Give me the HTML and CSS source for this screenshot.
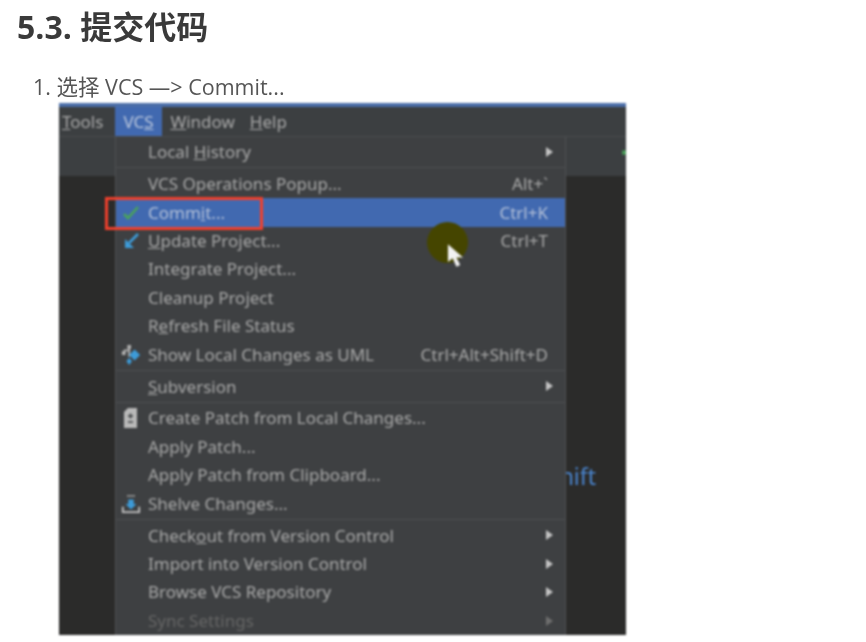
FILE: index.html
```html
<!DOCTYPE html>
<html lang="zh-CN">
<head>
  <meta charset="UTF-8" />
  <meta name="viewport" content="width=device-width, initial-scale=1.0" />
  <title>提交代码</title>
  <link rel="stylesheet" href="styles.css">
</head>
<body>
  <h2>5.3. 提交代码</h2>
  <p class="step">1. 选择 VCS —&gt; Commit...</p>

  <div class="shot">
    <div class="menubar">
      <span class="top"><u>T</u>ools</span>
      <span class="top active">VC<u>S</u></span>
      <span class="top"><u>W</u>indow</span>
      <span class="top"><u>H</u>elp</span>
    </div>
    <div class="toolbar"><i class="green-dot"></i></div>
    <div class="editor"></div>
    <span class="shift">Shift</span>

    <div class="menu">
      <div class="row"><span></span><span>Local <u>H</u>istory</span><span></span><i class="arrow"></i></div>
      <div class="sep"></div>
      <div class="row"><span></span><span>VCS Operations Popup...</span><span class="key">Alt+`</span></div>
      <div class="row current">
        <svg class="ico" viewBox="0 0 20 20"><path d="M3 11l4 4L17 4" fill="none" stroke="#4aa35a" stroke-width="2.6"/></svg>
        <span>Comm<u>i</u>t...</span><span class="key">Ctrl+K</span>
      </div>
      <div class="row">
        <svg class="ico" viewBox="0 0 20 20"><path d="M17 3L8 12" fill="none" stroke="#3d9bd8" stroke-width="2.6"/><path d="M4 8v9h9z" fill="#3d9bd8"/></svg>
        <span><u>U</u>pdate Project...</span><span class="key">Ctrl+T</span>
      </div>
      <div class="row"><span></span><span>Integrate Project...</span><span></span></div>
      <div class="row"><span></span><span>Cleanup Project</span><span></span></div>
      <div class="row"><span></span><span>R<u>e</u>fresh File Status</span><span></span></div>
      <div class="row">
        <svg class="ico" viewBox="0 0 22 22"><path d="M7 0h4v4H7zM1 7h4v4H1zM8 4h2v9H8zM3 7V5h6v2z" fill="#b4b4b4"/><path d="M15 5l6 6-6 6-6-6z" fill="#3d9bd8"/><path d="M9 14l3 4-3 4-3-4z" fill="#3d9bd8"/></svg>
        <span>Show Local Changes as UML</span><span class="key">Ctrl+Alt+Shift+D</span>
      </div>
      <div class="sep"></div>
      <div class="row"><span></span><span><u>S</u>ubversion</span><span></span><i class="arrow"></i></div>
      <div class="sep"></div>
      <div class="row">
        <svg class="ico" viewBox="0 0 20 20"><path d="M7 0h9v20H3V4z" fill="#b9b9b9"/><path d="M7 8h5M9.500 5.500v5M7 14h5" stroke="#3c3f41" stroke-width="1.500"/></svg>
        <span>Create Patch from Local Changes...</span><span></span>
      </div>
      <div class="row"><span></span><span>Apply Patch...</span><span></span></div>
      <div class="row"><span></span><span>Apply Patch from Clipboard...</span><span></span></div>
      <div class="row">
        <svg class="ico" viewBox="0 0 22 22"><path d="M8 6h6v5h3l-6 6-6-6h3z" fill="#3d9bd8"/><path d="M7 2h2M10 2h2M13 2h2" stroke="#b4b4b4" stroke-width="2"/><path d="M2 14v6h18v-6" fill="none" stroke="#c4c4c4" stroke-width="2"/></svg>
        <span>Shelve Changes...</span><span></span>
      </div>
      <div class="sep"></div>
      <div class="row"><span></span><span>Check<u>o</u>ut from Version Control</span><span></span><i class="arrow"></i></div>
      <div class="row"><span></span><span>Import into Version Control</span><span></span><i class="arrow"></i></div>
      <div class="row"><span></span><span>Browse VCS Repository</span><span></span><i class="arrow"></i></div>
      <div class="row off"><span></span><span>Sync Settings</span><span></span><i class="arrow"></i></div>
    </div>

    <div class="red-box"></div>
    <div class="halo"></div>
    <svg class="pointer" viewBox="0 0 18 26"><path d="M1 1v19l5-4 4 9 4-2-4-8h7z" fill="#f2f2f2"/></svg>
  </div>
</body>
</html>
```

FILE: styles.css
```css
html, body {
  margin: 0;
  padding: 0;
  overflow: hidden;
}
body {
  background: #fff;
  font-family: "Open Sans", "Noto Sans CJK SC", sans-serif;
  height: 642px;
}
h2 {
  margin: 0;
  padding: 5px 0 0 17px;
  height: 58px;
  box-sizing: border-box;
  font-size: 32px;
  line-height: 44px;
  font-weight: 700;
  color: #3a3a3a;
  filter: blur(0.6px);
}
.step {
  margin: 0;
  padding: 14px 0 0 33px;
  height: 45px;
  box-sizing: border-box;
  font-size: 21.5px;
  line-height: 30px;
  color: #555;
  filter: blur(0.6px);
}
.shot {
  position: relative;
  margin-left: 59px;
  width: 567px;
  height: 532px;
  display: flex;
  flex-direction: column;
  overflow: hidden;
  background: #2b2b2a;
  border-top: 4px solid #4b6ea8;
  box-sizing: border-box;
  font-family: "Noto Sans", "DejaVu Sans", sans-serif;
  font-size: 17px;
  color: #a8a8a8;
  filter: blur(0.9px);
}
.menubar {
  height: 30px;
  flex: none;
  display: flex;
  background: #3c3f41;
  border-bottom: 1px solid #4a4c4e;
  box-sizing: border-box;
}
.top {
  line-height: 29px;
  padding: 0 7px 0 8px;
}
.top:first-child {
  padding: 0 12px 0 3px;
}
.top.active {
  background: #4169b0;
  color: #b9c6dc;
  width: 47px;
  box-sizing: border-box;
  padding: 0 0 0 8px;
}
.toolbar {
  height: 39px;
  flex: none;
  background: #3c3f41;
  position: relative;
}
.green-dot {
  position: absolute;
  right: 0;
  top: 13px;
  width: 4px;
  height: 5px;
  background: #4aa35a;
  border-radius: 50%;
}
.editor {
  flex: 1;
  background: #2b2b2a;
}
.shift {
  position: absolute;
  left: 488px;
  top: 354px;
  font-size: 23px;
  line-height: 30px;
  color: #4a85cf;
}
.menu {
  position: absolute;
  left: 56px;
  top: 30px;
  width: 451px;
  height: 500px;
  padding-top: 1px;
  box-sizing: border-box;
  background: #3e4042;
  border-left: 1px solid #4f5153;
  border-right: 1px solid #4f5153;
}
.row {
  height: 28.4px;
  display: grid;
  grid-template-columns: 32px 1fr auto;
  align-items: center;
  padding-right: 17px;
  position: relative;
  line-height: 28px;
  white-space: nowrap;
}
.current {
  background: #4169b0;
  color: #b3c0d8;
}
.off {
  color: #666;
}
.key {
  color: #a8a8a8;
}
.current .key {
  color: #b3c0d8;
}
.sep {
  height: 3.6px;
  box-sizing: border-box;
  border-top: 1px solid #4d4f51;
  margin-top: 1px;
  margin-bottom: -1px;
}
.arrow {
  position: absolute;
  right: 12px;
  top: 9px;
  width: 0;
  height: 0;
  border-left: 7px solid #c4c4c4;
  border-top: 5px solid transparent;
  border-bottom: 5px solid transparent;
}
.off .arrow {
  border-left-color: #6e6e6e;
}
.ico {
  width: 20px;
  height: 20px;
  margin-left: 5px;
}
.red-box {
  position: absolute;
  left: 46px;
  top: 90px;
  width: 158px;
  height: 33px;
  border: 3px solid #f0402c;
  box-sizing: border-box;
}
.halo {
  position: absolute;
  left: 368px;
  top: 115px;
  width: 41px;
  height: 41px;
  border-radius: 50%;
  background: #454500;
}
.pointer {
  position: absolute;
  left: 388px;
  top: 136px;
  width: 17px;
  height: 25px;
}
```
